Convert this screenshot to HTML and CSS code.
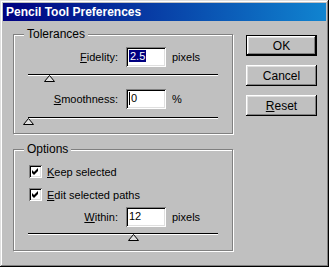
FILE: index.html
```html
<!DOCTYPE html>
<html lang="en">
<head>
    <meta charset="UTF-8">
    <title>Pencil Tool Preferences</title>
    <link rel="stylesheet" href="styles.css">
</head>
<body>
    <div class="window">
        <div class="titlebar">Pencil Tool Preferences</div>
        <div class="content">
            <div class="groups">
                <div class="group tolerances">
                    <span class="group-title">Tolerances</span>
                    <div class="field-row">
                        <span class="field-label"><u>F</u>idelity:</span>
                        <div class="textbox"><span class="selected">2.5</span></div>
                        <span class="unit">pixels</span>
                    </div>
                    <div class="slider first">
                        <span class="thumb" style="left: 11%"><svg width="11" height="7" viewBox="0 0 11 7"><polygon points="0.5,6.5 5.5,0.5 10.5,6.5" fill="#dfdfdf" stroke="#000"/></svg></span>
                    </div>
                    <div class="field-row">
                        <span class="field-label"><u>S</u>moothness:</span>
                        <div class="textbox"><span class="caret"></span>0</div>
                        <span class="unit">%</span>
                    </div>
                    <div class="slider">
                        <span class="thumb" style="left: 0%"><svg width="11" height="7" viewBox="0 0 11 7"><polygon points="0.5,6.5 5.5,0.5 10.5,6.5" fill="#dfdfdf" stroke="#000"/></svg></span>
                    </div>
                </div>

                <div class="group options">
                    <span class="group-title">Options</span>
                    <div class="check-row">
                        <span class="checkbox"><svg width="9" height="9" viewBox="0 0 9 9"><polygon points="1,3 3,5 7,1 7,4 3,8 1,6" fill="#000"/></svg></span>
                        <span><u>K</u>eep selected</span>
                    </div>
                    <div class="check-row second">
                        <span class="checkbox"><svg width="9" height="9" viewBox="0 0 9 9"><polygon points="1,3 3,5 7,1 7,4 3,8 1,6" fill="#000"/></svg></span>
                        <span><u>E</u>dit selected paths</span>
                    </div>
                    <div class="field-row within">
                        <span class="field-label"><u>W</u>ithin:</span>
                        <div class="textbox">12</div>
                        <span class="unit">pixels</span>
                    </div>
                    <div class="slider">
                        <span class="thumb" style="left: 55.5%"><svg width="11" height="7" viewBox="0 0 11 7"><polygon points="0.5,6.5 5.5,0.5 10.5,6.5" fill="#dfdfdf" stroke="#000"/></svg></span>
                    </div>
                </div>
            </div>

            <div class="buttons">
                <button class="button default">OK</button>
                <button class="button">Cancel</button>
                <button class="button"><u>R</u>eset</button>
            </div>
        </div>
    </div>
</body>
</html>
```

FILE: styles.css
```css
* {
    box-sizing: border-box;
}
body {
    margin: 0;
    background-color: #c0c0c0;
    font-family: 'Liberation Sans', Arial, sans-serif;
    font-size: 11px;
    color: #000;
}
u {
    text-decoration: underline;
    text-underline-offset: 1px;
}
.window {
    width: 329px;
    height: 267px;
    padding: 3px;
    background-color: #c0c0c0;
    box-shadow: inset -1px -1px #000, inset 1px 1px #dfdfdf, inset -2px -2px #808080, inset 2px 2px #fff;
}
.titlebar {
    height: 18px;
    line-height: 18px;
    padding-left: 3px;
    color: #fff;
    font-weight: bold;
    font-size: 12px;
    background: linear-gradient(to right, #000080, #1084d0);
}
.content {
    display: flex;
    padding: 13px 0 0 10px;
}
.groups {
    display: flex;
    flex-direction: column;
    gap: 15px;
    width: 220px;
}

/* etched group box */
.group {
    position: relative;
    border: 1px solid #808080;
    box-shadow: inset 1px 1px #fff, 1px 1px #fff;
}
.tolerances {
    padding: 12px 0 14px;
}
.options {
    padding: 15px 0 15px;
}
.group-title {
    position: absolute;
    top: -7px;
    left: 10px;
    padding: 0 3px;
    line-height: 13px;
    font-size: 12px;
    background-color: #c0c0c0;
}

.field-row {
    display: flex;
    align-items: center;
    height: 20px;
}
.field-label {
    width: 104px;
    margin-right: 8px;
    text-align: right;
}
.textbox {
    width: 40px;
    height: 20px;
    padding: 3px 0 0 3px;
    line-height: 13px;
    background-color: #fff;
    box-shadow: inset 1px 1px #808080, inset -1px -1px #fff, inset 2px 2px #000, inset -2px -2px #dfdfdf;
}
.selected {
    background-color: #000080;
    color: #fff;
    padding: 0 1px;
}
.caret {
    display: inline-block;
    width: 1px;
    height: 13px;
    margin-right: 1px;
    vertical-align: top;
    background-color: #000;
}
.unit {
    margin-left: 6px;
}

/* track with a triangular thumb */
.slider {
    position: relative;
    width: 190px;
    height: 0;
    margin: 7px 0 0 14px;
    border-top: 1px solid #000;
    border-bottom: 1px solid #fff;
}
.slider.first {
    margin-bottom: 13px;
}
.tolerances .slider:last-child {
    margin-top: 8px;
}
.options .slider {
    margin-top: 6px;
}
.thumb {
    position: absolute;
    top: 0;
    margin-left: -5px;
    width: 11px;
    height: 7px;
}
.thumb svg {
    display: block;
}

.check-row {
    display: flex;
    align-items: center;
    height: 13px;
    padding-left: 15px;
}
.check-row.second {
    margin-top: 10px;
}
.within {
    margin-top: 6px;
}
.checkbox {
    width: 13px;
    height: 13px;
    margin-right: 5px;
    padding: 2px;
    background-color: #fff;
    box-shadow: inset 1px 1px #808080, inset -1px -1px #fff, inset 2px 2px #000, inset -2px -2px #dfdfdf;
}
.checkbox svg {
    display: block;
}

.buttons {
    display: flex;
    flex-direction: column;
    gap: 9px;
    margin-left: 13px;
    padding-top: 1px;
}
.button {
    width: 71px;
    height: 21px;
    padding: 0;
    border: none;
    font-family: inherit;
    font-size: 12px;
    color: #000;
    background-color: #c0c0c0;
    box-shadow: inset -1px -1px #000, inset 1px 1px #fff, inset -2px -2px #808080, inset 2px 2px #dfdfdf;
}
.button.default {
    box-shadow: inset 0 0 0 1px #000, inset -2px -2px #000, inset 2px 2px #fff, inset -3px -3px #808080, inset 3px 3px #dfdfdf;
}
```
